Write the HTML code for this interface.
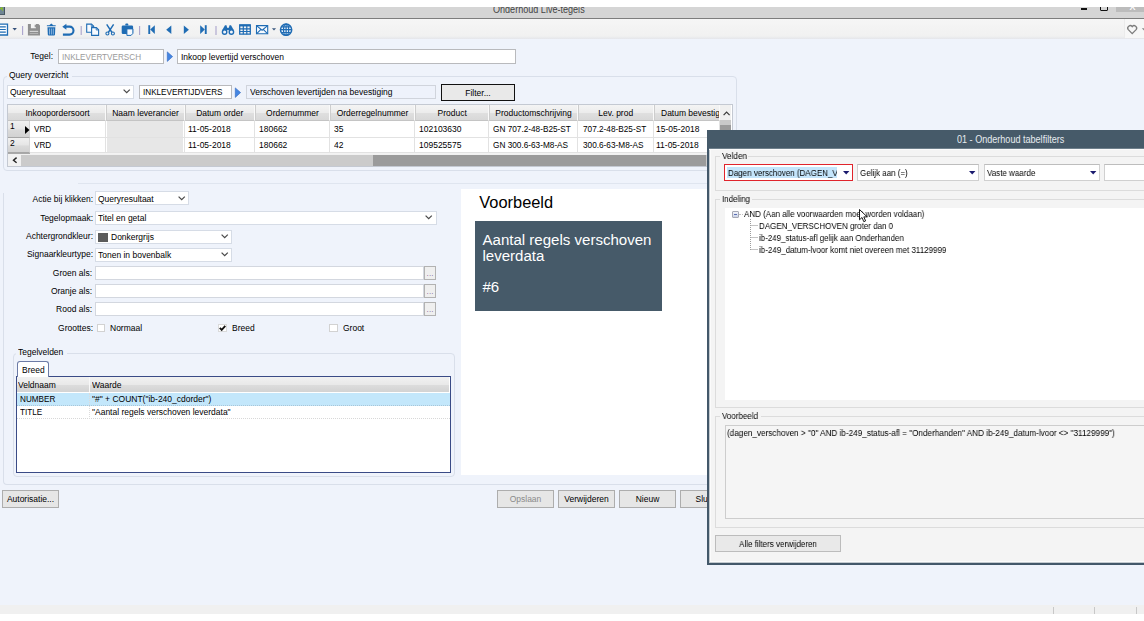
<!DOCTYPE html>
<html lang="nl">
<head>
<meta charset="utf-8">
<title>Onderhoud Live-tegels</title>
<style>
html,body{margin:0;padding:0;}
body{width:1144px;height:621px;position:relative;overflow:hidden;background:#fff;
  font-family:"Liberation Sans",sans-serif;font-size:10px;color:#000;}
div,span{box-sizing:border-box;}
.a{position:absolute;}
.t{position:absolute;white-space:nowrap;line-height:12px;height:12px;font-size:9.2px;transform:scaleX(.924);transform-origin:0 0;margin-top:.6px;}
.t.u{transform:scaleX(.886);}
.t.r{transform-origin:100% 0;text-align:right;}
.t.c{transform-origin:50% 0;text-align:center;}
.t.d{transform:scaleX(.87);margin-top:0;will-change:transform;}
.inp{position:absolute;background:#fff;border:1px solid #b9babd;}
.btn{position:absolute;background:#e6e6e6;border:1px solid #adadad;}
.gb{position:absolute;border:1px solid #d9dfea;border-radius:4px;}
.hd{position:absolute;top:0;height:16px;background:linear-gradient(#f4f4f4 0,#ececec 50%,#dfdfdf 56%,#d8d8d8 100%);border-right:1px solid #fafafa;border-left:1px solid #cdcdcd;border-bottom:1px solid #c4c4c4;}
.cell{position:absolute;height:16px;background:#fff;border-right:1px solid #e2e2e2;border-bottom:1px solid #e2e2e2;}
svg{position:absolute;overflow:visible;}
</style>
</head>
<body>

<!-- ===== main window chrome ===== -->
<div class="a" id="titlebar" style="left:0;top:7px;width:1144px;height:11px;background:#d5d5d5;overflow:hidden;">
  <div class="t" style="left:493px;top:-3.600px;font-size:10px;color:#444;transform:scaleX(.906);">Onderhoud Live-tegels</div>
  <div class="a" style="left:0;top:0;width:5px;height:7.800px;background:#708694;border-right:1px solid #44545f;border-bottom:1px solid #4c5d69;"></div>
  <svg style="left:0;top:0;" width="5" height="5"><path d="M-0.500 1.700L1.600 1.300L2.300 0M1.600 1.300L2.800 3.600" fill="none" stroke="#8cc614" stroke-width="1.100"/></svg>
  <div class="a" style="left:1081px;top:1.3px;width:6px;height:2.2px;background:#111;"></div>
  <div class="a" style="left:1100px;top:-4px;width:8.4px;height:7.800px;border:1.500px solid #111;border-radius:0 0 1px 1px;"></div>
  <div class="a" style="left:1116px;top:0;width:28px;height:4.700px;background:#bcbcbc;"></div>
  <div class="t" style="left:1129.500px;top:-8px;color:#fff;font-size:12px;transform:none;">x</div>
</div>
<div class="a" style="left:0;top:18px;width:1144px;height:1px;background:#7d7d7d;"></div>
<div class="a" id="toolbar" style="left:0;top:19px;width:1144px;height:20px;background:linear-gradient(#f6f6f6,#f1f1f1 85%,#e4e6ea);"></div>
<div class="a" style="left:1123.500px;top:19px;width:21px;height:19px;background:#f7f7f7;border-left:1px solid #ebebeb;"></div>
<div class="a" id="main" style="left:0;top:39px;width:1144px;height:566px;background:#eff3fb;"></div>
<div class="a" id="status" style="left:0;top:605px;width:1144px;height:9px;background:#f0f0f0;">
  <div class="a" style="left:1053px;top:2px;width:1px;height:7px;background:#c8c8c8;"></div>
  <div class="a" style="left:1094px;top:2px;width:1px;height:7px;background:#c8c8c8;"></div>
  <div class="a" style="left:1136px;top:2px;width:1px;height:7px;background:#c8c8c8;"></div>
</div>

<!-- ===== toolbar icons ===== -->
<svg id="tbicons" style="left:0;top:0;" width="1144" height="45" viewBox="0 0 1144 45">
  <!-- document/list -->
  <path d="M-3 24.100H7.500V35H-3z" fill="#fbfdff" stroke="#1f6cb4" stroke-width="1.300"/>
  <path d="M-2 26.900H5.800M-2 29.500H5.800M-2 32.200H5.800" fill="none" stroke="#1f6cb4" stroke-width="1.200"/>
  <path d="M12.500 28h4.400l-2.200 2.500z" fill="#35507a"/>
  <!-- separators -->
  <path d="M22.600 26v9M81.200 26v9M139.600 26v9M216 26v9" stroke="#aaa4cc" stroke-width="1.100" fill="none"/>
  <!-- save (disabled) -->
  <path d="M27.900 24h3v4.300h5v-4.300h2.600l1.500 1.500v10h-12.100z" fill="#8f8f8f"/>
  <path d="M34.700 24.700h1.200v2.600h-1.200z" fill="#8f8f8f"/>
  <path d="M29.700 31.400h8.400" stroke="#d2d2d2" stroke-width="1.200" fill="none"/>
  <path d="M29.700 33.500h8.400" stroke="#bcbcbc" stroke-width="0.800" fill="none"/>
  <!-- trash -->
  <path d="M46.900 26.200v-1h2.400l2-1.800l2 1.800h2.400v1z" fill="#1f6cb4"/>
  <path d="M47.500 27.300h7.800l-0.300 7.300q-0.100 1-1 1h-5.200q-0.900 0-1-1z" fill="#1f6cb4"/>
  <path d="M49.500 28.500v6M51.400 28.500v6M53.300 28.500v6" stroke="#b9d3ee" stroke-width="0.700" fill="none"/>
  <!-- undo -->
  <path d="M62.900 34.600h6.600a4 4 0 0 0 0-8h-4.300" fill="none" stroke="#1f6cb4" stroke-width="2.100"/>
  <path d="M62.300 26.700l4.100-3v6z" fill="#1f6cb4"/>
  <!-- copy -->
  <path d="M86.700 24.100h4.800l2.200 2.200v6h-7z" fill="#f8fbff" stroke="#1f6cb4" stroke-width="1.100"/>
  <path d="M91.300 24.300v2.200h2.200" fill="none" stroke="#1f6cb4" stroke-width="0.800"/>
  <path d="M91.600 27.600h4.800l2.200 2.200v5.600h-7z" fill="#f8fbff" stroke="#1f6cb4" stroke-width="1.100"/>
  <path d="M96.200 27.800v2.200h2.200" fill="none" stroke="#1f6cb4" stroke-width="0.800"/>
  <!-- cut -->
  <path d="M106.700 24.300l5.300 8.200M113.600 24.300l-5.300 8.200" fill="none" stroke="#1f6cb4" stroke-width="1.400"/>
  <circle cx="107.400" cy="33.500" r="1.500" fill="none" stroke="#1f6cb4" stroke-width="1.100"/>
  <circle cx="112.900" cy="33.500" r="1.500" fill="none" stroke="#1f6cb4" stroke-width="1.100"/>
  <!-- paste -->
  <path d="M125.400 25.600v-1.300q0-0.700 0.700-0.700h1.400q0.700 0 0.700 0.700v1.300z" fill="#1f6cb4"/>
  <path d="M123 25.400h8.800q1.300 0 1.300 1.300v6q0 1.300-1.300 1.300h-8.800q-1.300 0-1.300-1.300v-6q0-1.300 1.300-1.300z" fill="#1f6cb4"/>
  <path d="M126.900 28.900h6v4.500l-1.800 2h-4.200z" fill="#f8fbff" stroke="#1f6cb4" stroke-width="1"/>
  <!-- nav -->
  <g fill="#1f6cb4">
    <path d="M148.300 25.200h1.900v8.800h-1.900z"/><path d="M154.800 25.200v8.800l-4.600-4.400z"/>
    <path d="M171.300 25.500v8.400l-5.100-4.200z"/>
    <path d="M183.800 25.500v8.400l5.100-4.200z"/>
    <path d="M200.200 25.200v8.800l4.600-4.400z"/><path d="M204.800 25.200h1.900v8.800h-1.900z"/>
  </g>
  <!-- binoculars -->
  <g fill="#1f6cb4">
    <path d="M225 25.300h1.500l1.200 5h-5.500z"/><path d="M229.500 25.300h1.500l2.800 5h-5.500z"/>
    <path d="M226.800 27.800h2.400v2.200h-2.400z"/>
  </g>
  <g fill="#f3f6fb" stroke="#1f6cb4" stroke-width="1.400">
    <circle cx="224.600" cy="32" r="2.200"/><circle cx="231.400" cy="32" r="2.200"/>
  </g>
  <!-- table -->
  <g fill="none" stroke="#1f6cb4">
    <path d="M239.700 24.800h10.600v9.400h-10.600z" stroke-width="1.300"/>
    <path d="M239.700 25.500h10.600" stroke-width="1.900"/>
    <path d="M239.700 28.800h10.600M239.700 31.500h10.600M243.300 25v9.200M246.800 25v9.200" stroke-width="1.200"/>
  </g>
  <!-- mail -->
  <g fill="none" stroke="#1f6cb4" stroke-width="1.100">
    <path d="M256.500 25.600h11.200v8.200h-11.200z" fill="#f8fbff"/>
    <path d="M256.500 25.600l5.600 4.600 5.600-4.600M256.500 33.800l4.200-4.200M267.700 33.800l-4.200-4.200"/>
  </g>
  <path d="M271.900 28.300h4.200l-2.100 2.300z" fill="#3d5a80"/>
  <!-- globe -->
  <circle cx="286.100" cy="29.700" r="5.600" fill="#eaf2fb" stroke="#1f6cb4" stroke-width="1.500"/>
  <g fill="none" stroke="#1f6cb4" stroke-width="1.200">
    <ellipse cx="286.100" cy="29.700" rx="2.600" ry="5.600"/>
    <path d="M286.100 24v11.400M280.500 29.700h11.200M281.300 26.900h9.600M281.300 32.500h9.600"/>
  </g>
  <!-- favourite heart -->
  <path d="M1132.200 33.600l-3.900-4a2.450 2.450 0 0 1 3.900-3a2.450 2.450 0 0 1 3.900 3z" fill="none" stroke="#7c7c7c" stroke-width="1.300"/>
  <path d="M1141.800 28.200h4.600l-2.300 2.500z" fill="#8a8a8a"/>
</svg>

<!-- ===== top form fields ===== -->
<div class="t r" style="left:0;width:53px;top:49.3px;">Tegel:</div>
<div class="inp" style="left:58px;top:49px;width:106px;height:15px;"><div class="t u" style="left:3px;top:.2px;color:#9a9a9a;">INKLEVERTVERSCH</div></div>
<svg style="left:167px;top:51px;" width="6" height="11"><path d="M0.300 0.900L5.600 5.600L0.300 10.400z" fill="#4586e2" stroke="#2f66c0" stroke-width="0.600"/></svg>
<div class="inp" style="left:177px;top:49px;width:339px;height:15px;"><div class="t" style="left:3px;top:.2px;">Inkoop levertijd verschoven</div></div>

<div class="gb" style="left:3px;top:76px;width:734px;height:95px;"></div>
<div class="a" style="left:7px;top:70px;width:65px;height:12px;background:#eff3fb;"></div>
<div class="t" style="left:9px;top:68.6px;">Query overzicht</div>

<div class="inp" style="left:7px;top:85px;width:127px;height:14px;border-color:#d6dce6;"><div class="t" style="left:2px;top:-.4px;">Queryresultaat</div>
<svg style="left:115px;top:3.3px;" width="8" height="5"><path d="M0.6 0.6L3.7 3.7L6.8 0.6" fill="none" stroke="#4a4a4a" stroke-width="1.25"/></svg></div>
<div class="inp" style="left:139px;top:85px;width:93px;height:14px;"><div class="t u" style="left:3px;top:-.6px;">INKLEVERTIJDVERS</div></div>
<svg style="left:235px;top:87px;" width="6" height="11"><path d="M0.300 0.900L5.600 5.600L0.300 10.400z" fill="#4586e2" stroke="#2f66c0" stroke-width="0.600"/></svg>
<div class="inp" style="left:246px;top:85px;width:190px;height:14px;background:#eef2fb;border-color:#d0d4dc;"><div class="t" style="left:3px;top:-.4px;">Verschoven levertijden na bevestiging</div></div>
<div class="btn" style="left:441px;top:84px;width:74px;height:17px;border:1px solid #111;background:#e9e9e9;"><div class="t c" style="left:0;width:72px;top:1.3px;">Filter...</div></div>
<!-- ===== grid ===== -->
<div class="a" id="grid" style="left:7px;top:104px;width:726px;height:63px;background:#fff;border:1px solid #c4c9d2;overflow:hidden;">
<div class="hd" style="left:0px;width:98px;border-left:0;"><div class="t c" style="left:2px;right:0;top:1.8px;">Inkoopordersoort</div></div>
<div class="hd" style="left:98px;width:79px;"><div class="t c" style="left:0;right:0;top:1.8px;">Naam leverancier</div></div>
<div class="hd" style="left:177px;width:69.5px;"><div class="t c" style="left:0;right:0;top:1.8px;">Datum order</div></div>
<div class="hd" style="left:246.5px;width:75px;"><div class="t c" style="left:0;right:0;top:1.8px;">Ordernummer</div></div>
<div class="hd" style="left:321.5px;width:85px;"><div class="t c" style="left:0;right:0;top:1.8px;">Orderregelnummer</div></div>
<div class="hd" style="left:406.5px;width:74.5px;"><div class="t c" style="left:0;right:0;top:1.8px;">Product</div></div>
<div class="hd" style="left:481px;width:89px;"><div class="t c" style="left:0;right:0;top:1.8px;">Productomschrijving</div></div>
<div class="hd" style="left:570px;width:75.5px;"><div class="t c" style="left:0;right:0;top:1.8px;">Lev. prod</div></div>
<div class="hd" style="left:645.5px;width:66px;overflow:hidden;"><div class="t" style="left:6.5px;top:1.8px;">Datum bevestig</div></div>
<div class="a" style="left:0;top:16px;width:22px;height:17px;background:linear-gradient(#f0f0f0,#e6e6e6 50%,#dadada 56%,#d2d2d2);border-bottom:1px solid #a6a6a6;border-right:1px solid #d4d4d4;"><div class="t" style="left:2px;top:-2px;">1</div></div>
<div class="cell" style="left:22px;top:16px;width:76px;height:17px;"><div class="t u" style="left:4px;top:1.5px;">VRD</div></div>
<div class="cell" style="left:98px;top:16px;width:79px;height:17px;"><div class="a" style="left:1px;top:0;right:1px;bottom:0;background:#e7e7e7;"></div></div>
<div class="cell" style="left:177px;top:16px;width:69.5px;height:17px;"><div class="t" style="left:3.3px;top:1.5px;">11-05-2018</div></div>
<div class="cell" style="left:246.5px;top:16px;width:75px;height:17px;"><div class="t" style="left:4px;top:1.5px;">180662</div></div>
<div class="cell" style="left:321.5px;top:16px;width:85px;height:17px;"><div class="t" style="left:4px;top:1.5px;">35</div></div>
<div class="cell" style="left:406.5px;top:16px;width:74.5px;height:17px;"><div class="t" style="left:4px;top:1.5px;">102103630</div></div>
<div class="cell" style="left:481px;top:16px;width:89px;height:17px;"><div class="t u" style="left:4.2px;top:1.5px;transform:scaleX(.897);">GN 707.2-48-B25-ST</div></div>
<div class="cell" style="left:570px;top:16px;width:75.5px;height:17px;"><div class="t u" style="left:4.5px;top:1.5px;transform:scaleX(.897);">707.2-48-B25-ST</div></div>
<div class="cell" style="left:645.5px;top:16px;width:66px;height:17px;"><div class="t" style="left:2.3px;top:1.5px;">15-05-2018</div></div>
<div class="a" style="left:0;top:33px;width:22px;height:15px;background:linear-gradient(#f0f0f0,#e6e6e6 50%,#dadada 56%,#d2d2d2);border-bottom:1px solid #a6a6a6;border-right:1px solid #d4d4d4;"><div class="t" style="left:2px;top:-2px;">2</div></div>
<div class="cell" style="left:22px;top:33px;width:76px;height:15px;"><div class="t u" style="left:4px;top:0.3px;">VRD</div></div>
<div class="cell" style="left:98px;top:33px;width:79px;height:15px;"><div class="a" style="left:1px;top:0;right:1px;bottom:0;background:#e7e7e7;"></div></div>
<div class="cell" style="left:177px;top:33px;width:69.5px;height:15px;"><div class="t" style="left:3.3px;top:0.3px;">11-05-2018</div></div>
<div class="cell" style="left:246.5px;top:33px;width:75px;height:15px;"><div class="t" style="left:4px;top:0.3px;">180662</div></div>
<div class="cell" style="left:321.5px;top:33px;width:85px;height:15px;"><div class="t" style="left:4px;top:0.3px;">42</div></div>
<div class="cell" style="left:406.5px;top:33px;width:74.5px;height:15px;"><div class="t" style="left:4px;top:0.3px;">109525575</div></div>
<div class="cell" style="left:481px;top:33px;width:89px;height:15px;"><div class="t u" style="left:4.2px;top:0.3px;transform:scaleX(.897);">GN 300.6-63-M8-AS</div></div>
<div class="cell" style="left:570px;top:33px;width:75.5px;height:15px;"><div class="t u" style="left:4.5px;top:0.3px;transform:scaleX(.897);">300.6-63-M8-AS</div></div>
<div class="cell" style="left:645.5px;top:33px;width:66px;height:15px;"><div class="t" style="left:2.3px;top:0.3px;">11-05-2018</div></div>
<div class="a" style="left:0;top:48px;width:22px;height:1px;background:#a9a9a9;"></div>
<div class="a" style="left:22px;top:48px;width:690px;height:1px;background:#f3f3f3;"></div>
<svg style="left:17px;top:20.5px;" width="5" height="8"><path d="M0 0L4.5 4L0 8z" fill="#000"/></svg>
<div class="a" style="left:712px;top:0;width:11px;height:49px;background:#f0f0f0;"></div>
<svg style="left:715px;top:5.5px;" width="8" height="5"><path d="M0.6 4.1L3.600 1.100L6.600 4.100" fill="none" stroke="#3a3a3a" stroke-width="1.200"/></svg>
<div class="a" style="left:712px;top:14.5px;width:11px;height:5.5px;background:#c9c9c9;"></div>
<div class="a" style="left:712px;top:20px;width:11px;height:29px;background:#9b9b9b;"></div>
<div class="a" style="left:0;top:49px;width:725px;height:12px;background:#f1f1f1;"></div>
<div class="a" style="left:13px;top:50px;width:686px;height:11px;background:#cbcbcb;"></div>
<div class="a" style="left:365px;top:50px;width:333px;height:11px;background:#9b9b9b;"></div>
<svg style="left:4px;top:52.400px;" width="6" height="7"><path d="M4.600 0.600L1.500 3.200L4.600 5.800" fill="none" stroke="#222" stroke-width="1.400"/></svg>
</div>
<!-- ===== middle form ===== -->
<div class="a" style="left:78px;top:183px;width:1066px;height:1px;background:#dfe5ef;"></div>
<div class="a" style="left:3px;top:193px;width:1141px;height:292px;border:1px solid #d9dfea;border-right:0;border-top:0;border-radius:0 0 0 4px;"></div>

<div class="t r" style="left:0;width:93px;top:192px;">Actie bij klikken:</div>
<div class="inp" style="left:95px;top:191px;width:94px;height:14px;border-color:#d6dce6;"><div class="t" style="left:2px;top:0;">Queryresultaat</div>
<svg style="left:82px;top:3.7px;" width="8" height="5"><path d="M0.6 0.6L3.7 3.7L6.8 0.6" fill="none" stroke="#4a4a4a" stroke-width="1.25"/></svg></div>

<div class="t r" style="left:0;width:93px;top:211px;">Tegelopmaak:</div>
<div class="inp" style="left:95px;top:210.5px;width:341.5px;height:14px;border-color:#d6dce6;"><div class="t" style="left:2px;top:0;">Titel en getal</div>
<svg style="left:329px;top:3.7px;" width="8" height="5"><path d="M0.6 0.6L3.7 3.7L6.8 0.6" fill="none" stroke="#4a4a4a" stroke-width="1.25"/></svg></div>

<div class="t r" style="left:0;width:93px;top:229.8px;">Achtergrondkleur:</div>
<div class="inp" style="left:95px;top:229.5px;width:137px;height:14px;border-color:#d6dce6;"><div class="a" style="left:2px;top:2px;width:10px;height:9px;background:#5b5b5b;"></div><div class="t" style="left:15px;top:0;">Donkergrijs</div>
<svg style="left:124.8px;top:3.5px;" width="8" height="5"><path d="M0.6 0.6L3.7 3.7L6.8 0.6" fill="none" stroke="#4a4a4a" stroke-width="1.25"/></svg></div>

<div class="t r" style="left:0;width:93px;top:247.8px;">Signaarkleurtype:</div>
<div class="inp" style="left:95px;top:247.7px;width:137px;height:14px;border-color:#d6dce6;"><div class="t" style="left:2px;top:0;">Tonen in bovenbalk</div>
<svg style="left:124.8px;top:3.5px;" width="8" height="5"><path d="M0.6 0.6L3.7 3.7L6.8 0.6" fill="none" stroke="#4a4a4a" stroke-width="1.25"/></svg></div>

<div class="t r" style="left:0;width:92px;top:266px;">Groen als:</div>
<div class="inp" style="left:95px;top:266px;width:329px;height:14px;border-color:#d3d7df;"></div><div class="a" style="left:424px;top:266px;width:12px;height:13.5px;background:#efefef;border:1px solid #b2b2b2;"></div><div class="t" style="left:426.5px;top:267.2px;font-size:8px;color:#7a5a96;letter-spacing:0.2px;transform:none;">...</div>

<div class="t r" style="left:0;width:92px;top:284px;">Oranje als:</div>
<div class="inp" style="left:95px;top:284px;width:329px;height:14px;border-color:#d3d7df;"></div><div class="a" style="left:424px;top:284px;width:12px;height:13.5px;background:#efefef;border:1px solid #b2b2b2;"></div><div class="t" style="left:426.5px;top:285.2px;font-size:8px;color:#7a5a96;letter-spacing:0.2px;transform:none;">...</div>

<div class="t r" style="left:0;width:92px;top:302.2px;">Rood als:</div>
<div class="inp" style="left:95px;top:302px;width:329px;height:14px;border-color:#d3d7df;"></div><div class="a" style="left:424px;top:302px;width:12px;height:13.5px;background:#efefef;border:1px solid #b2b2b2;"></div><div class="t" style="left:426.5px;top:303.2px;font-size:8px;color:#7a5a96;letter-spacing:0.2px;transform:none;">...</div>

<div class="t r" style="left:0;width:93px;top:321px;">Groottes:</div>
<div class="a" style="left:96.500px;top:324px;width:8.500px;height:8px;background:#fff;border:1px solid #d2d2d2;"></div>
<div class="t" style="left:110px;top:321px;">Normaal</div>
<div class="a" style="left:218px;top:324px;width:9px;height:8px;background:#fff;border:1px solid #dadada;"></div>
<svg style="left:219px;top:325px;" width="7" height="6"><path d="M0.800 2.800L2.700 4.900L6.300 0.800" fill="none" stroke="#111" stroke-width="1.800"/></svg>
<div class="t" style="left:232px;top:321px;">Breed</div>
<div class="a" style="left:329px;top:324px;width:8.500px;height:8px;background:#fff;border:1px solid #d2d2d2;"></div>
<div class="t" style="left:343px;top:321px;">Groot</div>

<!-- ===== Tegelvelden ===== -->
<div class="gb" style="left:13px;top:353px;width:442px;height:124px;"></div>
<div class="a" style="left:16px;top:347px;width:51px;height:12px;background:#eff3fb;"></div>
<div class="t" style="left:18px;top:345.6px;">Tegelvelden</div>
<div class="a" style="left:16px;top:376px;width:435px;height:97px;background:#fff;border:1px solid #3a4b86;"></div>
<div class="a" style="left:17px;top:361px;width:32px;height:16px;background:#fff;border:1px solid #6c7ba6;border-bottom:0;border-radius:3px 3px 0 0;"></div>
<div class="t" style="left:22px;top:363px;">Breed</div>
<div class="a" style="left:17px;top:377px;width:432px;height:15px;background:linear-gradient(#f1f1f1 0,#e9e9e9 50%,#dcdcdc 55%,#d3d3d3 100%);"></div>
<div class="a" style="left:89px;top:377px;width:1px;height:15px;background:#f8f8f8;"></div>
<div class="t" style="left:18px;top:378.5px;">Veldnaam</div>
<div class="t" style="left:92px;top:378.5px;">Waarde</div>
<div class="a" style="left:17px;top:393px;width:433px;height:13px;background:#c3e7fb;border-bottom:1px dotted #a9c6d8;"></div>
<div class="t u" style="left:20px;top:392px;">NUMBER</div>
<div class="t" style="left:92px;top:392px;">"#" + COUNT("ib-240_cdorder")</div>
<div class="a" style="left:17px;top:406px;width:433px;height:13px;border-bottom:1px dotted #d8d8d8;"></div>
<div class="a" style="left:89px;top:393px;width:1px;height:26px;border-left:1px dotted #dcdcdc;"></div>
<div class="t u" style="left:20px;top:405px;">TITLE</div>
<div class="t" style="left:92px;top:405px;">"Aantal regels verschoven leverdata"</div>

<!-- ===== preview panel ===== -->
<div class="a" style="left:461px;top:189px;width:300px;height:286px;background:#fff;"></div>
<div class="a" style="left:479.3px;top:192px;font-size:16.4px;line-height:20px;white-space:nowrap;">Voorbeeld</div>
<div class="a" style="left:475px;top:221.3px;width:187px;height:90px;background:#465a69;"></div>
<div class="a" style="left:482.5px;top:231.8px;font-size:15.05px;line-height:16px;color:#fff;white-space:nowrap;">Aantal regels verschoven</div>
<div class="a" style="left:482.5px;top:248px;font-size:15.05px;line-height:16px;color:#fff;white-space:nowrap;">leverdata</div>
<div class="a" style="left:482.5px;top:279px;font-size:15.05px;line-height:16px;color:#fff;white-space:nowrap;">#6</div>

<!-- ===== bottom buttons ===== -->
<div class="btn" style="left:2px;top:490px;width:57px;height:18px;"><div class="t c" style="left:0;width:55px;top:1.3px;">Autorisatie...</div></div>
<div class="btn" style="left:497px;top:490px;width:57px;height:18px;"><div class="t c" style="left:0;width:55px;top:1.3px;color:#8a8a8a;">Opslaan</div></div>
<div class="btn" style="left:558px;top:490px;width:57px;height:18px;"><div class="t c" style="left:0;width:55px;top:1.3px;">Verwijderen</div></div>
<div class="btn" style="left:619px;top:490px;width:57px;height:18px;"><div class="t c" style="left:0;width:55px;top:1.3px;">Nieuw</div></div>
<div class="btn" style="left:680px;top:490px;width:57px;height:18px;"><div class="t c" style="left:0;width:55px;top:1.3px;">Sluiten</div></div>

<!-- ===== dialog: Onderhoud tabelfilters ===== -->
<div class="a" id="dlg" style="left:707px;top:130px;width:460px;height:435px;background:#f4f4f4;border-left:2px solid #43586a;border-bottom:2px solid #43586a;box-shadow:inset 1px -1px 0 rgba(67,88,106,.3),inset 2px -2px 0 #fbfbfb;"></div>
<div class="a" style="left:707px;top:130px;width:437px;height:18px;background:#465a69;"></div>
<div class="a" style="left:709px;top:148px;width:435px;height:1px;background:#6f808c;"></div>
<div class="a" style="left:709px;top:149px;width:435px;height:1px;background:#fbfbfb;"></div>
<div class="t" style="left:957px;top:133.3px;color:#e6ecf0;font-size:10px;transform:scaleX(.906);">01 - Onderhoud tabelfilters</div>

<div class="a" style="left:715px;top:156px;width:440px;height:35px;border:1px solid #dcdcdc;"></div>
<div class="a" style="left:720px;top:150px;width:28px;height:12px;background:#f4f4f4;"></div>
<div class="t d" style="left:722px;top:150px;transform:scaleX(.89);">Velden</div>

<div class="a" style="left:724px;top:164px;width:129px;height:17px;background:#fff;border:1px solid #e0242c;"></div>
<div class="a" style="left:727px;top:167px;width:110px;height:11px;background:#c4e5fb;"></div>
<div class="a" style="left:727px;top:166px;width:110px;height:13px;overflow:hidden;"><div class="t d" style="left:1px;top:.6px;">Dagen verschoven (DAGEN_V</div></div>
<svg style="left:843px;top:171px;" width="7" height="4"><path d="M0 0H6.4L3.200 3.600z" fill="#1a1a6e"/></svg>

<div class="a" style="left:857px;top:164px;width:122px;height:17px;background:#fff;border:1px solid #d0d0d0;border-top-color:#bdbdbd;"></div>
<div class="t d" style="left:860px;top:166.6px;">Gelijk aan (=)</div>
<svg style="left:969px;top:171px;" width="7" height="4"><path d="M0 0H6.4L3.200 3.600z" fill="#1a1a6e"/></svg>

<div class="a" style="left:984px;top:164px;width:116px;height:17px;background:#fff;border:1px solid #d0d0d0;border-top-color:#bdbdbd;"></div>
<div class="t d" style="left:987px;top:166.6px;">Vaste waarde</div>
<svg style="left:1090px;top:171px;" width="7" height="4"><path d="M0 0H6.4L3.200 3.600z" fill="#1a1a6e"/></svg>

<div class="a" style="left:1104px;top:164px;width:60px;height:17px;background:#fff;border:1px solid #d0d0d0;border-top-color:#bdbdbd;"></div>

<div class="a" style="left:715px;top:199px;width:440px;height:209px;border:1px solid #dcdcdc;"></div>
<div class="a" style="left:720px;top:193px;width:32px;height:12px;background:#f4f4f4;"></div>
<div class="t d" style="left:722px;top:193px;">Indeling</div>
<div class="a" style="left:725px;top:208px;width:430px;height:192px;background:#fff;"></div>

<!-- tree -->
<div class="a" style="left:732px;top:210.5px;width:7px;height:7px;background:linear-gradient(#f2f4fa,#ccd4e8);border:1px solid #a6a8b4;border-radius:1px;"></div>
<div class="a" style="left:734px;top:213.5px;width:3px;height:1px;background:#5b6fb5;"></div>
<div class="a" style="left:739px;top:213.500px;width:4px;height:0;border-top:1px dotted #c2c2c2;"></div>
<div class="a" style="left:750px;top:219px;width:0;height:31px;border-left:1px dotted #9c9c9c;"></div>
<div class="a" style="left:751px;top:225.3px;width:6.5px;height:0;border-top:1px solid #c4c4c4;"></div>
<div class="a" style="left:751px;top:237.3px;width:6.5px;height:0;border-top:1px solid #c4c4c4;"></div>
<div class="a" style="left:751px;top:249.3px;width:6.5px;height:0;border-top:1px solid #c4c4c4;"></div>
<div class="t d" style="left:744px;top:208px;">AND (Aan alle voorwaarden moet worden voldaan)</div>
<div class="t d" style="left:759px;top:220px;">DAGEN_VERSCHOVEN groter dan 0</div>
<div class="t d" style="left:758.5px;top:232px;transform:scaleX(.862);">ib-249_status-afl gelijk aan Onderhanden</div>
<div class="t d" style="left:758.5px;top:244px;transform:scaleX(.87);">ib-249_datum-lvoor komt niet overeen met 31129999</div>
<!-- mouse cursor -->
<svg style="left:859px;top:209px;" width="10" height="14" viewBox="0 0 10 14"><path d="M0.500 0.500V10.800L3 8.500L4.800 12.700L6.600 11.900L4.800 7.900H8.200z" fill="#fff" stroke="#000" stroke-width="0.900" stroke-linejoin="miter"/></svg>

<div class="a" style="left:715px;top:416px;width:440px;height:112px;border:1px solid #dcdcdc;"></div>
<div class="a" style="left:720px;top:410px;width:41px;height:12px;background:#f4f4f4;"></div>
<div class="t d" style="left:722px;top:410px;">Voorbeeld</div>
<div class="a" style="left:725px;top:425px;width:430px;height:94px;background:#f5f5f5;border:1px solid #cdcdcd;"></div>
<div class="t d" style="left:727px;top:426.6px;transform:scaleX(.888);">(dagen_verschoven &gt; "0" AND ib-249_status-afl = "Onderhanden" AND ib-249_datum-lvoor &lt;&gt; "31129999")</div>

<div class="btn" style="left:715px;top:535px;width:126px;height:17px;background:#e9e9e9;border-color:#bcbcbc;"><div class="t d c" style="left:0;width:124px;top:2px;">Alle filters verwijderen</div></div>

</body>
</html>
